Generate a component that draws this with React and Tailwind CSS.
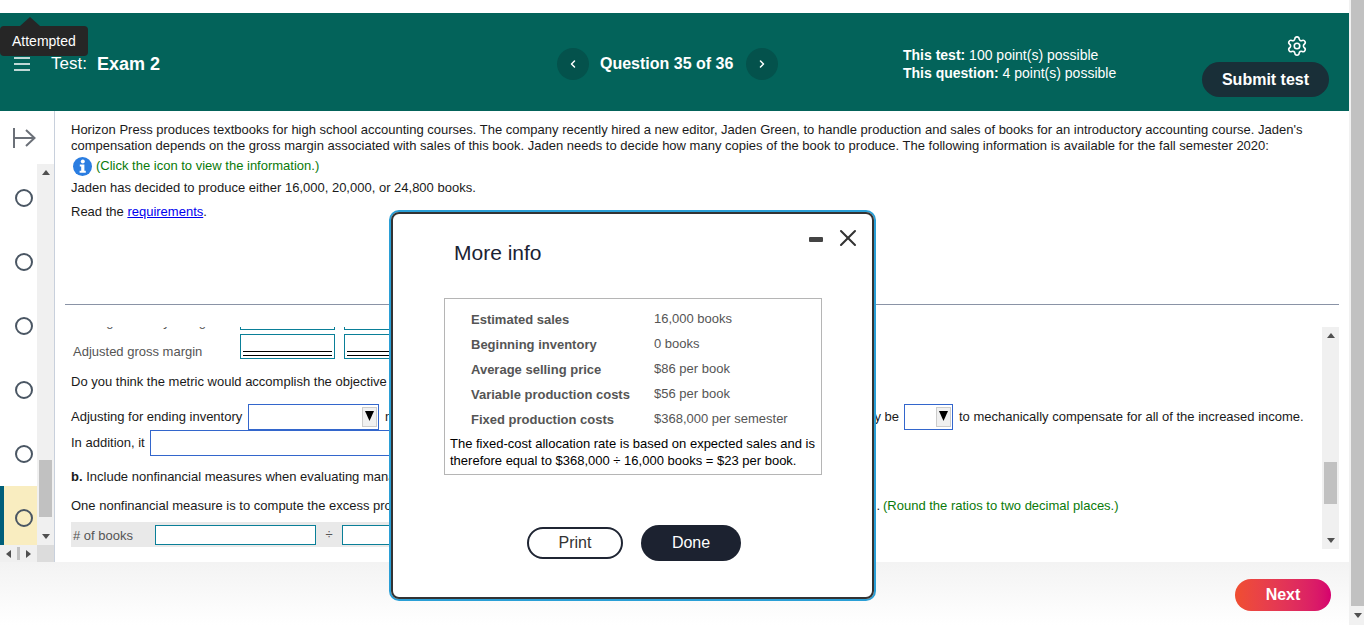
import { ChevronLeft, ChevronRight, Settings, X } from 'lucide-react'

const font = { fontFamily: '"Liberation Sans", Arial, sans-serif' }

function ScrollArrow({ dir = 'up', className = '' }) {
  const points = { up: '0,5 4,0 8,5', down: '0,0 4,5 8,0', left: '5,0 0,4 5,8', right: '0,0 5,4 0,8' }
  const wide = dir === 'up' || dir === 'down'
  return (
    <svg width={wide ? 8 : 5} height={wide ? 5 : 8} className={className}>
      <polygon points={points[dir]} fill="#505050" />
    </svg>
  )
}

function DropSelect({ width }) {
  return (
    <div className={`${width} h-[26px] shrink-0 border border-[#3366cc] flex justify-end items-start pt-[2px] pr-[1px] bg-white`}>
      <div className="w-[15px] h-[20px] bg-[#f0f0f0] border border-[#cccccc] flex justify-center pt-[3px]">
        <svg width="9" height="10"><polygon points="0,0 9,0 4.5,10" fill="#000" /></svg>
      </div>
    </div>
  )
}

function Radio() {
  return <div className="w-[18px] h-[18px] rounded-full border-2 border-[#4a5663]" />
}

const infoRows = [
  ['Estimated sales', '16,000 books'],
  ['Beginning inventory', '0 books'],
  ['Average selling price', '$86 per book'],
  ['Variable production costs', '$56 per book'],
  ['Fixed production costs', '$368,000 per semester'],
]

export default function App() {
  return (
    <div className="relative w-[1364px] h-[625px] flex overflow-hidden bg-white text-[13px] leading-[16px] text-[#1a1a1a]" style={font}>
      <div className="w-[1349px] flex flex-col">
        <div className="h-[13px] shrink-0" />

        {/* Header */}
        <header className="h-[98px] shrink-0 flex bg-[#03635a] text-white">
          <div className="w-[557px] flex items-center pt-[3px]">
            <svg width="16" height="14" className="ml-[14px]" viewBox="0 0 16 14">
              <path d="M0 1h16M0 7h16M0 13h16" stroke="#fff" strokeWidth="1.5" />
            </svg>
            <span className="ml-[21px] text-[17px] leading-[20px]">Test:</span>
            <span className="ml-[10px] text-[18px] leading-[20px] font-bold">Exam 2</span>
          </div>
          <div className="w-[346px] flex items-center pt-[3px]">
            <div className="w-[32px] h-[32px] rounded-full bg-[#04524c] flex items-center justify-center">
              <ChevronLeft size={12} strokeWidth={3} />
            </div>
            <span className="ml-[11px] w-[146px] text-[16px] leading-[20px] font-bold">Question 35 of 36</span>
            <div className="w-[32px] h-[32px] rounded-full bg-[#04524c] flex items-center justify-center">
              <ChevronRight size={12} strokeWidth={3} />
            </div>
          </div>
          <div className="flex-1 pt-[33px] text-[14px] leading-[18px]">
            <div><b>This test:</b> 100 point(s) possible</div>
            <div><b>This question:</b> 4 point(s) possible</div>
          </div>
          <div className="flex flex-col items-end pt-[22px] pr-[20px]">
            <Settings size={22} strokeWidth={1.75} className="mr-[21px]" />
            <div className="mt-[5px] w-[127px] h-[35px] rounded-full bg-[#192f38] flex items-center justify-center text-[16px] font-bold">
              Submit test
            </div>
          </div>
        </header>

        {/* Body */}
        <div className="h-[451px] shrink-0 flex">
          <aside className="w-[55px] shrink-0 flex flex-col border-r border-[#c8d0dc]">
            <div className="h-[53px] shrink-0 pl-[13px] pt-[17px]">
              <svg width="23" height="20" viewBox="0 0 23 20" fill="none" stroke="#6b7078" strokeWidth="2">
                <path d="M1 0v20M1 10h20M13 2l8.5 8-8.5 8" />
              </svg>
            </div>
            <div className="h-[381px] flex overflow-hidden">
              <div className="w-[37px] pt-[2px]">
                {[0, 1, 2, 3, 4].map((i) => (
                  <div key={i} className="h-[64px] flex items-center justify-center pl-[11px]"><Radio /></div>
                ))}
                <div className="h-[64px] flex items-center justify-center bg-[#f9edc0] border-l-4 border-[#005f7a] pl-[7px]"><Radio /></div>
              </div>
              <div className="w-[17px] bg-[#f0f0f0] flex flex-col items-center justify-between py-[6px] relative">
                <ScrollArrow dir="up" />
                <div className="w-[13px] h-[57px] bg-[#c1c1c1] mt-[268px]" />
                <ScrollArrow dir="down" />
              </div>
            </div>
            <div className="h-[17px] flex">
              <div className="w-[37px] bg-[#f0f0f0] flex items-center pl-[6px]">
                <ScrollArrow dir="left" />
                <div className="ml-[6px] w-[3px] h-[13px] bg-[#c1c1c1]" />
                <ScrollArrow dir="right" className="ml-[6px]" />
              </div>
              <div className="flex-1 bg-[#dcdcdc]" />
            </div>
          </aside>

          <main className="flex-1 flex flex-col">
            <div className="h-[193px] shrink-0 pl-[16px] pt-[11px] pr-[30px]">
              <p>
                Horizon Press produces textbooks for high school accounting courses. The company recently hired a new editor, Jaden Green, to handle production and sales of books for an introductory accounting course. Jaden's compensation depends on the gross margin associated with sales of this book. Jaden needs to decide how many copies of the book to produce. The following information is available for the fall semester 2020:
              </p>
              <div className="mt-[2px] flex items-center h-[19px]">
                <svg width="19" height="19" viewBox="0 0 19 19" className="ml-[2px] mt-[2px]">
                  <circle cx="9.5" cy="9.5" r="9.5" fill="#2a7de1" />
                  <circle cx="9.8" cy="4.6" r="2" fill="#fff" />
                  <path d="M6.8 7.6h4.6v6.2h1.4v2H6.6v-2h1.6V9.6H6.8z" fill="#fff" />
                </svg>
                <span className="ml-[4px] text-[#0a7a0a]">(Click the icon to view the information.)</span>
              </div>
              <p className="mt-[5px]">Jaden has decided to produce either 16,000, 20,000, or 24,800 books.</p>
              <p className="mt-[8px]">Read the <span className="text-[#0000ee] underline">requirements</span>.</p>
            </div>

            <div className="h-px shrink-0 ml-[10px] w-[1274px] bg-[#8a93a6]" />

            <div className="mt-[22px] h-[222px] shrink-0 ml-[10px] w-[1274px] flex">
              <div className="flex-1 overflow-hidden pl-[6px]">
                <div className="-mt-[22px] h-[25px] flex items-center text-[#555555]">
                  <span className="w-[169px] pl-[2px] pt-[9px]">Ending inventory charge</span>
                  <div className="w-[95px] h-[25px] border border-[#0a7f98]" />
                  <div className="ml-[9px] w-[95px] h-[25px] border border-[#0a7f98]" />
                </div>
                <div className="mt-[4px] h-[25px] flex items-center text-[#555555]">
                  <span className="w-[169px] pl-[2px] pt-[11px]">Adjusted gross margin</span>
                  <div className="w-[95px] h-[25px] border border-[#0a7f98] flex flex-col justify-end px-[2px] pb-[2px]">
                    <div className="h-[5px] border-y border-black" />
                  </div>
                  <div className="ml-[9px] w-[95px] h-[25px] border border-[#0a7f98] flex flex-col justify-end px-[2px] pb-[2px]">
                    <div className="h-[5px] border-y border-black" />
                  </div>
                </div>
                <p className="mt-[15px]">Do you think the metric would accomplish the objective of motivating Jaden to produce only as many books as can be sold?</p>
                <div className="mt-[14px] h-[26px] flex items-center">
                  <span className="w-[177px]">Adjusting for ending inventory</span>
                  <DropSelect width="w-[131px]" />
                  <span className="ml-[6px] w-[514px] flex justify-between">
                    <span>not</span>
                    <span>likely be</span>
                  </span>
                  <span className="ml-[5px]"><DropSelect width="w-[49px]" /></span>
                  <span className="ml-[6px] whitespace-nowrap">to mechanically compensate for all of the increased income.</span>
                </div>
                <div className="h-[26px] flex items-center">
                  <span className="w-[79px]">In addition, it</span>
                  <div className="w-[500px] h-[26px] border border-[#3366cc]" />
                </div>
                <p className="mt-[13px]"><b>b.</b> Include nonfinancial measures when evaluating management.</p>
                <div className="mt-[13px] flex">
                  <span className="w-[812px] shrink-0 flex justify-between pr-[3px]">
                    <span>One nonfinancial measure is to compute the excess production ratio</span>
                    <span>.</span>
                  </span>
                  <span className="text-[#0a7a0a] whitespace-nowrap">(Round the ratios to two decimal places.)</span>
                </div>
                <div className="mt-[8px] h-[25px] w-[500px] bg-[#e9e9e9] flex items-center text-[#555555]">
                  <span className="w-[84px] pl-[2px] pt-[2px]"># of books</span>
                  <div className="w-[161px] h-[20px] bg-white border border-[#0a7f98]" />
                  <span className="w-[26px] text-center">÷</span>
                  <div className="w-[161px] h-[20px] bg-white border border-[#0a7f98]" />
                </div>
              </div>
              <div className="w-[17px] bg-[#f0f0f0] flex flex-col items-center justify-between py-[6px]">
                <ScrollArrow dir="up" />
                <div className="w-[13px] h-[42px] bg-[#c1c1c1] mt-[90px]" />
                <ScrollArrow dir="down" />
              </div>
            </div>
          </main>
        </div>

        {/* Footer */}
        <footer className="h-[63px] shrink-0 bg-gradient-to-b from-[#f3f3f3] to-white flex justify-end pt-[17px] pr-[18px]">
          <div className="w-[96px] h-[32px] rounded-full bg-gradient-to-r from-[#f04e30] to-[#d6006e] flex items-center justify-center text-white text-[16px] font-bold">
            Next
          </div>
        </footer>
      </div>

      {/* Page scrollbar */}
      <div className="w-[15px] flex flex-col bg-[#f1f1f1] pl-[2px]">
        <div className="h-[606px] bg-[#c1c1c1]" />
        <div className="flex-1 flex items-center justify-center"><ScrollArrow dir="down" /></div>
      </div>

      {/* Attempted tooltip */}
      <div className="absolute left-0 top-[26px] w-[88px] h-[30px] rounded-[4px] bg-[#262626] text-white text-[14px] leading-[30px] pl-[12px]">
        Attempted
        <div className="absolute left-[20px] -top-[9px] w-0 h-0 border-x-[10px] border-x-transparent border-b-[9px] border-b-[#262626]" />
      </div>

      {/* More info dialog */}
      <div className="absolute left-[389px] top-[210px] w-[487px] h-[391px] rounded-[10px] border-2 border-[#2a9fd6]">
        <div className="relative w-full h-full rounded-[8px] border-2 border-[#333333] bg-white flex flex-col items-start pl-[61px]">
          <h2 className="mt-[25px] text-[21px] leading-[28px] text-[#1a2233]">More info</h2>
          <div className="absolute left-[416px] top-[23px] w-[14px] h-[5px] rounded-[1px] bg-[#444444]" />
          <X size={28} strokeWidth={1.75} className="absolute left-[441px] top-[10px] text-[#333333]" />

          <div className="mt-[31px] -ml-[10px] w-[378px] h-[177px] border border-[#b5b5b5] pt-[8px] px-[5px]">
            {infoRows.map(([label, value]) => (
              <div key={label} className="h-[25px] flex items-center text-[#555555]">
                <span className="ml-[21px] w-[183px] font-bold">{label}</span>
                <span className="-mt-[2px]">{value}</span>
              </div>
            ))}
            <p className="text-black mt-[3px] leading-[17px]">
              The fixed-cost allocation rate is based on expected sales and is therefore equal to $368,000 ÷ 16,000 books = $23 per book.
            </p>
          </div>

          <div className="mt-[50px] ml-[73px] flex items-center text-[16px]">
            <div className="w-[96px] h-[32px] rounded-full border-2 border-[#1f2533] flex items-center justify-center text-[#333333]">Print</div>
            <div className="ml-[18px] w-[100px] h-[36px] rounded-full bg-[#1c2230] flex items-center justify-center text-white">Done</div>
          </div>
        </div>
      </div>
    </div>
  )
}
